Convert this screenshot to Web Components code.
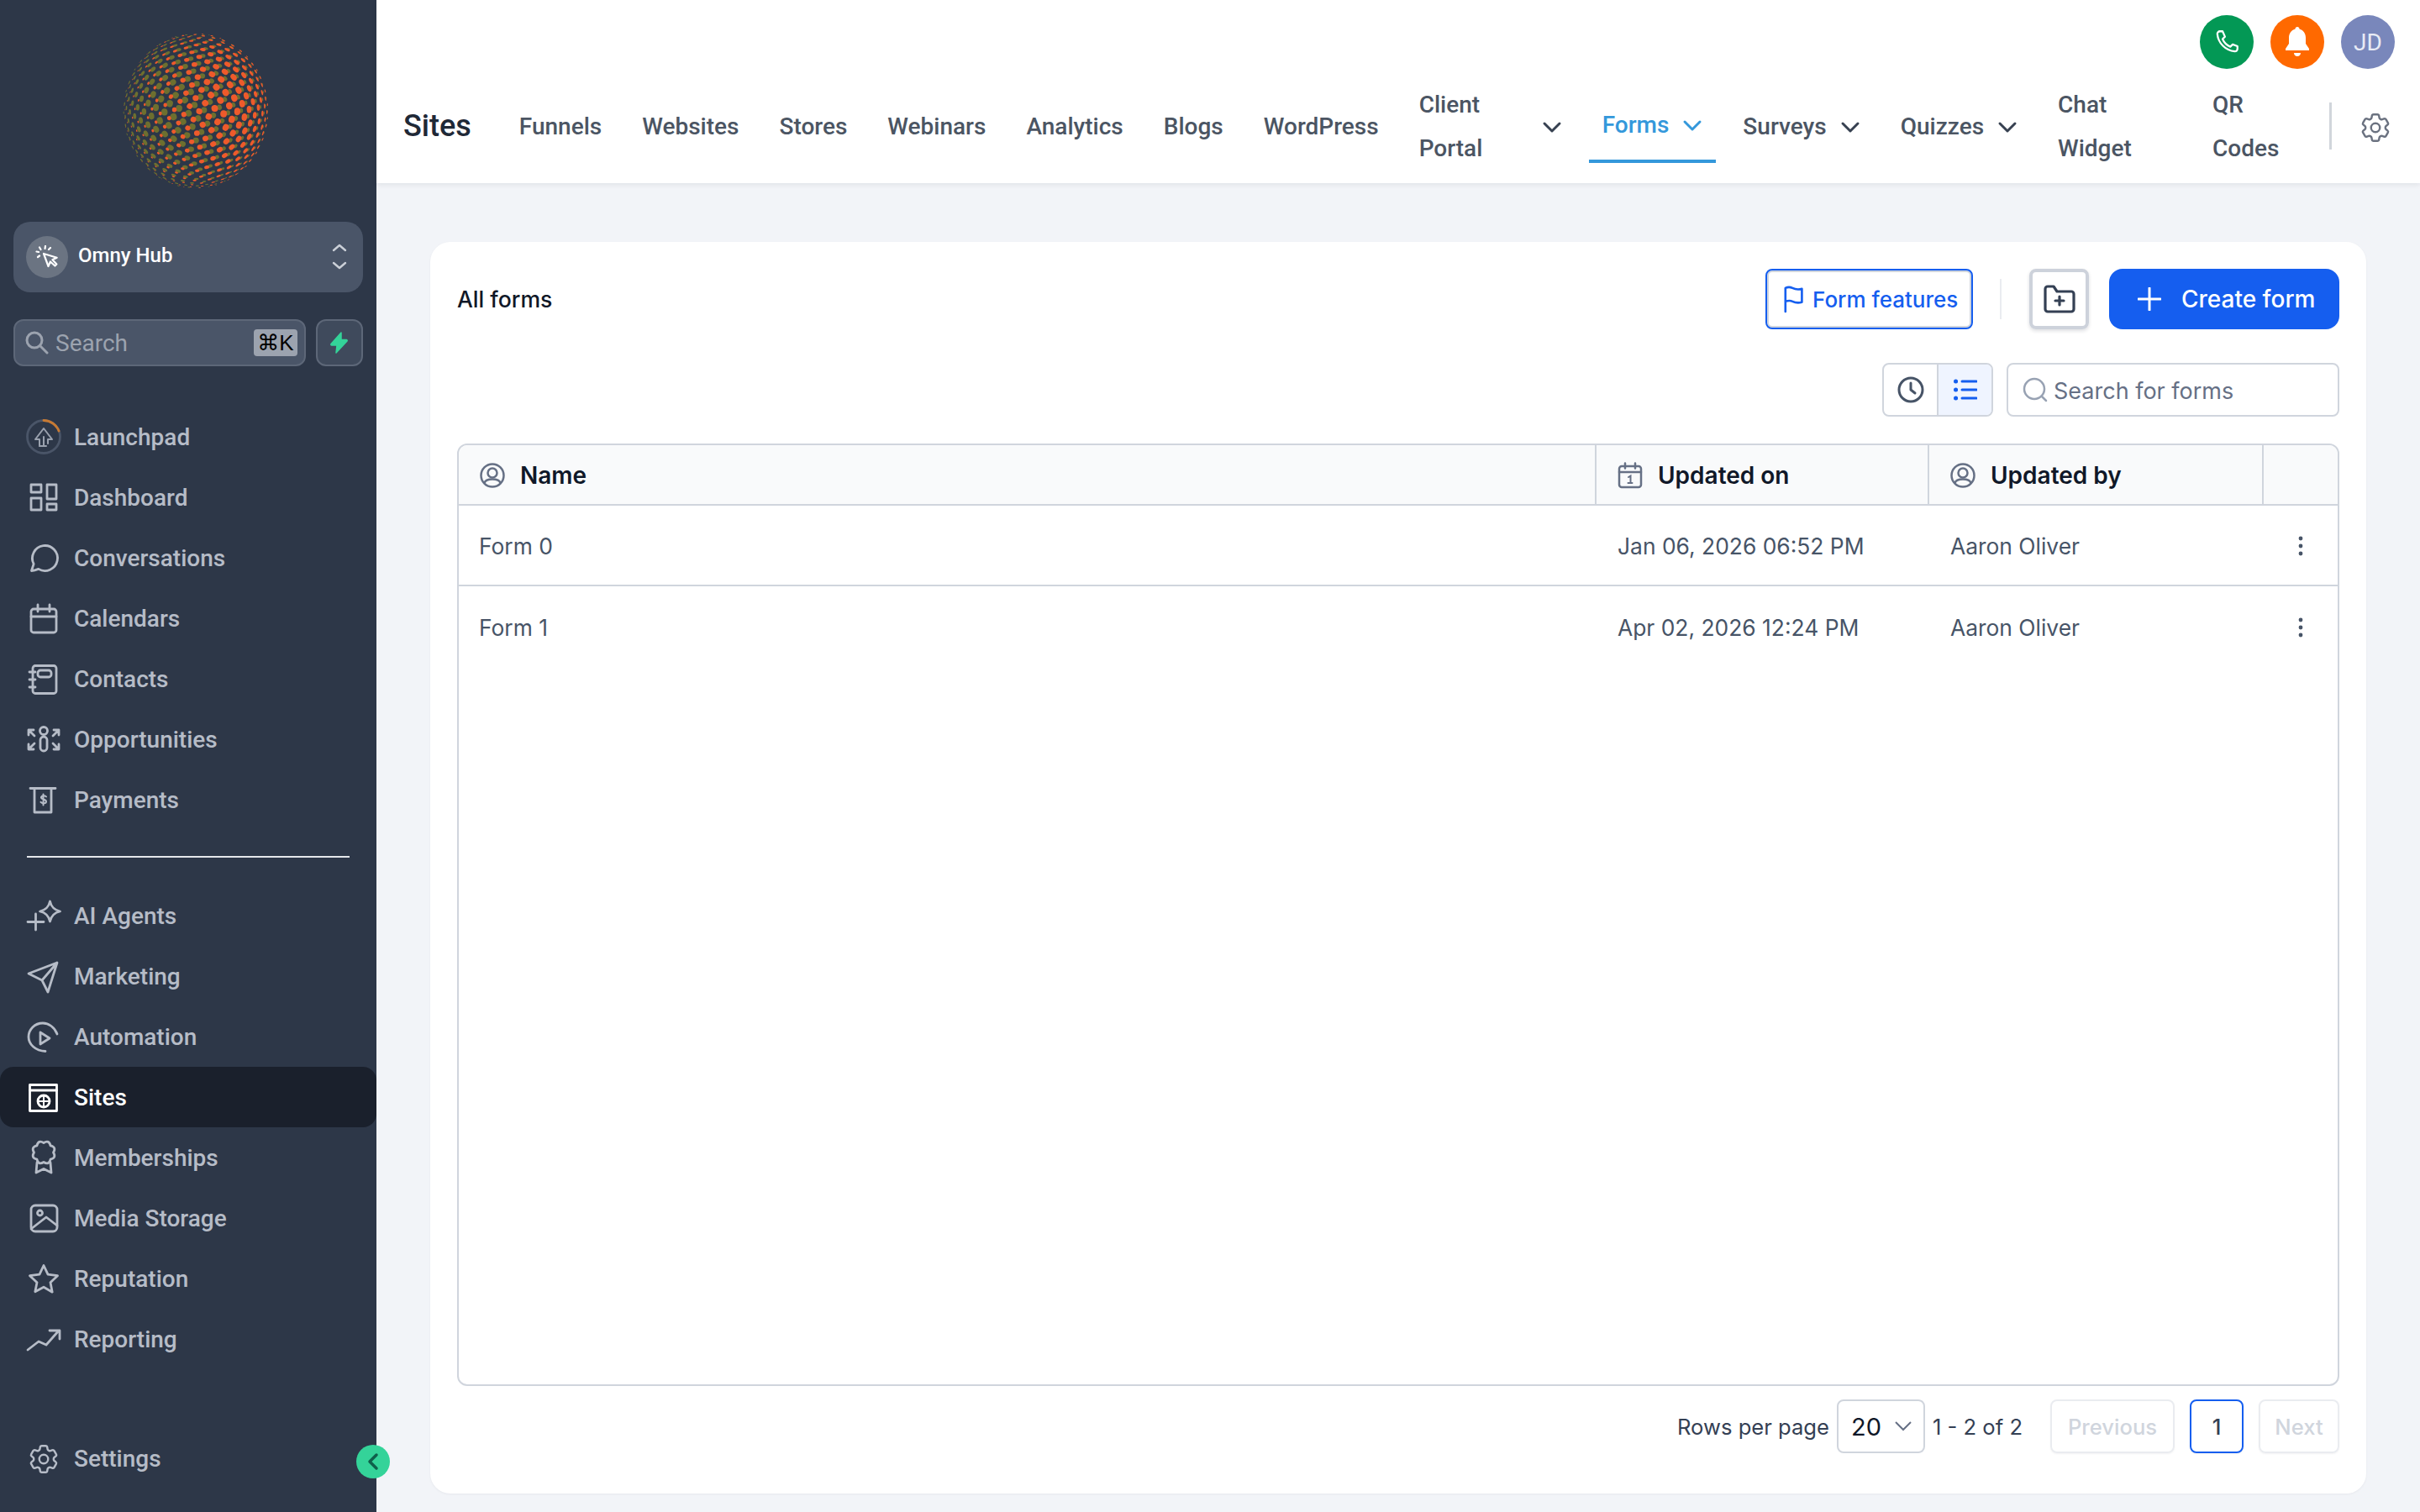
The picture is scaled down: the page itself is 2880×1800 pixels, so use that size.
<!DOCTYPE html>
<html lang="en">
<head>
<meta charset="utf-8">
<title>Forms</title>
<style>
	html, body { margin: 0; height: 100%; background: #f2f4f8; overflow: hidden; }
</style>
</head>
<body>
<app-shell>
	<side-bar slot="side"></side-bar>
	<top-bar slot="top"></top-bar>
	<forms-card slot="main"></forms-card>
</app-shell>

<script>
const gear = `<path d="M9.594 3.94c.09-.542.56-.94 1.11-.94h2.593c.55 0 1.02.398 1.11.94l.213 1.281c.063.374.313.686.645.87.074.04.147.083.22.127.325.196.72.257 1.075.124l1.217-.456a1.125 1.125 0 0 1 1.37.49l1.296 2.247a1.125 1.125 0 0 1-.26 1.431l-1.003.827c-.293.241-.438.613-.43.992a7.723 7.723 0 0 1 0 .255c-.008.378.137.75.43.991l1.004.827c.424.35.534.955.26 1.43l-1.298 2.247a1.125 1.125 0 0 1-1.369.491l-1.217-.456c-.355-.133-.75-.072-1.076.124a6.47 6.47 0 0 1-.22.128c-.331.183-.581.495-.644.869l-.213 1.281c-.09.543-.56.94-1.11.94h-2.594c-.55 0-1.019-.398-1.11-.94l-.213-1.281c-.062-.374-.312-.686-.644-.87a6.52 6.52 0 0 1-.22-.127c-.325-.196-.72-.257-1.076-.124l-1.217.456a1.125 1.125 0 0 1-1.369-.49l-1.297-2.247a1.125 1.125 0 0 1 .26-1.431l1.004-.827c.292-.24.437-.613.43-.991a6.932 6.932 0 0 1 0-.255c.007-.38-.138-.751-.43-.992l-1.004-.827a1.125 1.125 0 0 1-.26-1.43l1.297-2.247a1.125 1.125 0 0 1 1.37-.491l1.216.456c.356.133.751.072 1.076-.124.072-.044.146-.086.22-.128.332-.183.582-.495.644-.869l.214-1.28Z"/><circle cx="12" cy="12" r="3"/>`;

// scalloped edge of the memberships badge
function scallop(cx, cy, r, lobes) {
	let d = '';
	for (let i = 0; i < lobes; i++) {
		const a = i / lobes * Math.PI * 2, b = (i + 1) / lobes * Math.PI * 2, m = (a + b) / 2;
		const p = (t, q) => `${(cx + Math.cos(t) * q).toFixed(1)} ${(cy + Math.sin(t) * q).toFixed(1)}`;
		d += (i ? '' : `M${p(a, r)}`) + `Q${p(m, r * 1.45)} ${p(b, r)}`;
	}
	return d + 'Z';
}

const SIDE_ICONS = {
	launchpad: `<circle cx="24" cy="24" r="19.5" stroke="#4a5568"/><path d="M24 4.5A19.5 19.5 0 0 1 42 17" stroke="#c77a33"/><g stroke-width="2" stroke="#9aa1ae"><path d="M19 35V27H14L24 14l10 13h-5v5"/><path d="M24 24v11M24 35h-5M24 35h3"/></g>`,
	dashboard: `<rect x="9" y="9" width="12" height="9"/><rect x="28" y="9" width="11" height="17"/><rect x="9" y="25" width="12" height="14"/><rect x="28" y="32" width="11" height="7"/>`,
	chat: `<path d="M9.5 39.5l2.6-8.2A15 15 0 1 1 17.8 37.4C14.8 38.6 12.4 39.3 9.5 39.5Z"/>`,
	calendar: `<rect x="9" y="13" width="30" height="28" rx="3"/><path d="M9 22h30M17 8v8M31 8v8"/>`,
	contacts: `<rect x="11" y="8.500" width="28" height="33" rx="3"/><rect x="17" y="14" width="16" height="8" rx="3"/><path d="M7 16h7M7 25h7M7 34h7"/>`,
	opportunities: `<circle cx="24" cy="14" r="4.500"/><path d="M20 25a4 4 0 0 1 8 0v9a4 4 0 0 1-8 0Z"/><path d="M6 19v-6h6M6 13l7 7M42 19v-6h-6M42 13l-7 7M6 30v6h6M6 36l7-7M42 30v6h-6M42 36l-7-7"/>`,
	payments: `<path d="M8 10.500h30M13 10.500V39h20V10.500"/><path stroke-width="2" d="M27 20.500c-1-1.500-5-2-6 .3-1 3 6 2.400 6 5.400 0 2.500-5 2.600-6.500.6M23.500 17.500v13"/>`,
	agents: `<path d="M14.500 22v19M5 31.500h19"/><path d="M31.500 7c1.500 6.500 4.500 10 12 12-7.500 1.500-10.500 5.500-12 12-1.500-6.500-4.500-10.500-12-12 7.500-2 10.500-5.500 12-12Z"/>`,
	marketing: `<path d="M40 8L6 21l16 8 7 14ZM40 8L22 29"/>`,
	automation: `<path d="M40 21C37 13 30 8 23 8 13 8 6 16 6 24.500S14 41 26 41.500"/><path d="M20 19l11 7-11 7Z"/>`,
	sites: `<rect x="7.500" y="9.500" width="32" height="31"/><path d="M7.500 16h32"/><circle cx="24" cy="29" r="7"/><path stroke-width="2" d="M17 29h14M24 22v14"/>`,
	memberships: `<path d="${scallop(24, 18, 11.5, 8)}"/><path d="M16 30l-1 12 9-4.500 9 4.500-1-12"/>`,
	media: `<rect x="9" y="9" width="31" height="31" rx="5"/><circle cx="19.500" cy="18" r="3"/><path d="M9 37l18-14 13 10"/>`,
	star: `<path d="M24 8.500l5 10.700 11.500 1.500-8.500 8 2.200 11.500L24 34.200l-10.200 5.500L16 28.700l-8.500-8L19 19.200Z"/>`,
	reporting: `<path d="M5 37l13-10 9 4 15-17M31 14h12v10"/>`,
	settings: `<g transform="translate(3 4) scale(1.75)" stroke-width="1.4">${gear}</g>`
};

class AppShell extends HTMLElement {
	constructor() {
		super();
		this.attachShadow({mode: 'open'}).innerHTML = `
			<style>
				:host { display: grid; grid-template-columns: 448px 1fr; grid-template-rows: 218px 1fr; height: 1800px; width: 2880px; }
				.side { grid-row: 1 / 3; display: flex; }
				.top { display: flex; }
				.main { display: flex; padding: 70px 64px 22px; min-height: 0; }
			</style>
			<div class="side"><slot name="side"></slot></div>
			<div class="top"><slot name="top"></slot></div>
			<div class="main"><slot name="main"></slot></div>
		`;
	}
}

class DotSphere extends HTMLElement {
	constructor() {
		super();
		let dots = '';
		const layer = (count, yaw, pitch, size, fill, bias) => {
			const golden = Math.PI * (3 - Math.sqrt(5));
			for (let i = 0; i < count; i++) {
				const y = 1 - (i + .5) / count * 2, ring = Math.sqrt(1 - y * y), t = i * golden + yaw;
				let x = Math.cos(t) * ring, z = Math.sin(t) * ring, yy = y;
				// tilt so that the poles sit near the top and bottom edge
				const yy2 = yy * Math.cos(pitch) - z * Math.sin(pitch);
				z = yy * Math.sin(pitch) + z * Math.cos(pitch);
				yy = yy2;
				if (z <= .02) continue;
				const weight = .55 + .45 * bias(x, yy);
				const r = size * Math.pow(z, .4) * weight;
				if (r < .5) continue;
				const ang = Math.atan2(yy * 92, x * 86) * 180 / Math.PI;
				const cx = 88 + x * 86, cy = 93 + yy * 92;
				dots += `<ellipse cx="${cx.toFixed(1)}" cy="${cy.toFixed(1)}" rx="${(r * Math.max(z, .3)).toFixed(2)}" ry="${r.toFixed(2)}" transform="rotate(${(ang).toFixed(0)} ${cx.toFixed(1)} ${cy.toFixed(1)})" fill="${fill}"/>`;
			}
		};
		layer(640, .5, .1, 4.6, '#6d6f2f', (x, y) => Math.min(1, Math.max(.3, .6 - x * .7)));
		layer(640, 0, .1, 5, '#ee5a2b', (x, y) => Math.min(1, Math.max(-.4, .35 + x * 1 - y * .2)));
		this.attachShadow({mode: 'open'}).innerHTML = `
			<style>
				:host { display: block; width: 176px; height: 186px; }
				svg { display: block; }
			</style>
			<svg width="176" height="186" viewBox="0 0 176 186">${dots}</svg>
		`;
	}
}

class SideLink extends HTMLElement {
	constructor() {
		super();
		this.attachShadow({mode: 'open'}).innerHTML = `
			<style>
				:host { display: flex; align-items: center; gap: 12px; height: 72px; padding-left: 28px; border-radius: 16px; color: #b6bcc7; font: 500 28px Roboto, sans-serif; }
				:host([active]) { background: #1a202c; color: #fff; }
				svg { width: 48px; height: 48px; flex: none; fill: none; stroke: currentColor; stroke-width: 2.8; stroke-linejoin: round; stroke-linecap: round; }
			</style>
			<svg viewBox="0 0 48 48">${SIDE_ICONS[this.getAttribute('icon')]}</svg>
			<slot></slot>
		`;
	}
}

class SideBar extends HTMLElement {
	constructor() {
		super();
		this.attachShadow({mode: 'open'}).innerHTML = `
			<style>
				:host { display: flex; flex-direction: column; width: 448px; height: 1800px; background: #2d3748; position: relative; font-family: Roboto, sans-serif; }
				.logo { display: flex; justify-content: center; height: 264px; padding-top: 39px; box-sizing: border-box; padding-left: 18px; }
				.hub { display: flex; align-items: center; margin: 0 16px; height: 84px; background: #4a5568; border-radius: 20px; padding: 0 19px 0 15px; color: #fff; font-weight: 500; font-size: 24px; }
				.hub .logo-dot { width: 50px; height: 50px; border-radius: 50%; background: #6b7482; display: flex; align-items: center; justify-content: center; margin-right: 12px; }
				.hub span { flex: 1; padding-bottom: 4px; }
				.find { display: flex; gap: 12px; margin: 32px 16px 48px; height: 56px; }
				.box { display: flex; align-items: center; box-sizing: border-box; height: 56px; border: 2px solid #5d6778; border-radius: 12px; background: #4a5568; }
				.input { flex: 1; padding: 0 8px 0 12px; gap: 8px; color: #9ca3af; font-size: 28px; }
				.input span { flex: 1; }
				kbd { font: 400 26px "Liberation Sans", "DejaVu Sans", sans-serif; color: #000; background: #9ca3af; height: 32px; width: 52px; border-radius: 4px; display: flex; align-items: center; justify-content: center; }
				.bolt { width: 56px; justify-content: center; background: #3f4a5c; }
				nav { display: flex; flex-direction: column; }
				hr { border: 0; height: 2px; background: #e5e7eb; margin: 31px 32px 33px; }
				.end { margin-top: auto; margin-bottom: 28px; }
				.toggle { position: absolute; left: 424px; top: 1720px; width: 40px; height: 40px; border-radius: 50%; background: #34d399; display: flex; align-items: center; justify-content: center; }
			</style>
			<div class="logo"><dot-sphere></dot-sphere></div>
			<div class="hub">
				<div class="logo-dot"><svg width="28" height="28" viewBox="0 0 28 28" fill="none" stroke="#fff" stroke-width="2.200" stroke-linecap="round" stroke-linejoin="round"><path d="M10 10l5.500 15 2.400-5.500 5.500 5 2-2-5-5.300 5.300-2.400Z" fill="none"/><path d="M5 2.500l1.500 2.500M1.500 7.500l2.500.5M3 14l2-1.500M12 1l-.5 3M18 3l-2 2"/></svg></div>
				<span>Omny Hub</span>
				<svg width="18" height="34" viewBox="0 0 18 34" fill="none" stroke="#cbd0d8" stroke-width="2.400" stroke-linecap="round" stroke-linejoin="round"><path d="M2 9l7-6 7 6M2 24l7 6 7-6"/></svg>
			</div>
			<div class="find">
				<div class="box input">
					<svg width="28" height="28" viewBox="0 0 28 28" fill="none" stroke="#9ca3af" stroke-width="3" stroke-linecap="round"><circle cx="11" cy="11" r="9"/><path d="M18 18l8 8"/></svg>
					<span>Search</span>
					<kbd>⌘K</kbd>
				</div>
				<div class="box bolt"><svg width="24" height="26" viewBox="0 0 24 26" fill="#34d399" stroke="#34d399" stroke-width="1.500" stroke-linejoin="round"><path d="M14 1L2 14.500c-.5.600 0 1.500.7 1.500H9l-1 9 13-14c.5-.600 0-1.500-.8-1.500H14Z"/></svg></div>
			</div>
			<nav>
				<side-link icon="launchpad">Launchpad</side-link>
				<side-link icon="dashboard">Dashboard</side-link>
				<side-link icon="chat">Conversations</side-link>
				<side-link icon="calendar">Calendars</side-link>
				<side-link icon="contacts">Contacts</side-link>
				<side-link icon="opportunities">Opportunities</side-link>
				<side-link icon="payments">Payments</side-link>
			</nav>
			<hr>
			<nav>
				<side-link icon="agents">AI Agents</side-link>
				<side-link icon="marketing">Marketing</side-link>
				<side-link icon="automation">Automation</side-link>
				<side-link icon="sites" active>Sites</side-link>
				<side-link icon="memberships">Memberships</side-link>
				<side-link icon="media">Media Storage</side-link>
				<side-link icon="star">Reputation</side-link>
				<side-link icon="reporting">Reporting</side-link>
			</nav>
			<nav class="end"><side-link icon="settings">Settings</side-link></nav>
			<div class="toggle"><svg width="20" height="22" viewBox="0 0 20 22" fill="none" stroke="#0f5f4b" stroke-width="3.500" stroke-linecap="round" stroke-linejoin="round"><path d="M14 3l-8 8 8 8"/></svg></div>
		`;
	}
}

class TabItem extends HTMLElement {
	constructor() {
		super();
		const chevron = this.hasAttribute('menu') ? `<svg width="24" height="24" viewBox="0 0 24 24" fill="none" stroke="currentColor" stroke-width="3" stroke-linecap="round" stroke-linejoin="round"><path d="M3 8l9 9 9-9"/></svg>` : '';
		this.attachShadow({mode: 'open'}).innerHTML = `
			<style>
				:host { display: flex; align-items: center; gap: 16px; padding: 2px 16px 0; box-sizing: border-box; height: 104px; color: #4b5563; font: 500 28px/52px Roboto, sans-serif; white-space: nowrap; }
				:host([wrap]) { white-space: normal; }
				:host([active]) { color: #3498db; padding-top: 10px; box-sizing: content-box; align-self: flex-start; border-bottom: 4px solid #3498db; height: 82px; }
				svg { flex: none; color: #374151; }
				:host([active]) svg { color: #3498db; }
			</style>
			<slot></slot>${chevron}
		`;
	}
}

class TopBar extends HTMLElement {
	constructor() {
		super();
		this.attachShadow({mode: 'open'}).innerHTML = `
			<style>
				:host { display: block; flex: 1; height: 218px; box-sizing: border-box; background: #fff; box-shadow: 0 2px 6px rgba(16, 24, 40, .08); position: relative; font-family: Roboto, sans-serif; }
				.actions { display: flex; justify-content: flex-end; gap: 20px; padding: 18px 30px 0 0; }
				.round { width: 64px; height: 64px; border-radius: 50%; display: flex; align-items: center; justify-content: center; color: #e8ebf5; font-size: 28px; }
				.tabs { display: flex; align-items: center; padding-left: 32px; margin-top: 16px; height: 104px; gap: 16px; }
				h1 { margin: 0 25px 0 0; font: 500 36px Roboto, sans-serif; color: #1f2937; }
				.wide1 { width: 130px; }
				.wide2 { width: 136px; }
				.wide3 { width: 97px; }
				.rule { width: 3px; height: 56px; background: #d1d5db; margin-left: 10px; }
				.cog { width: 42px; height: 42px; margin: 4px 0 0 15px; fill: none; stroke: #6b7280; stroke-width: 1.400; }
			</style>
			<div class="actions">
				<div class="round" style="background:#039855"><svg width="34" height="34" viewBox="0 0 24 24" fill="none" stroke="#fff" stroke-width="1.600" stroke-linecap="round" stroke-linejoin="round"><path d="M8.500 3H6.300C5 3 4 4 4.100 5.300 4.800 13 11 19.200 18.700 19.900 20 20 21 19 21 17.700v-2.200l-4-1.500-2 2c-2.800-1.200-5.300-3.700-6.500-6.500l2-2Z"/></svg></div>
				<div class="round" style="background:#ff6900"><svg width="36" height="40" viewBox="0 0 36 40" fill="#fff"><path d="M18 2c-1.500 0-2.500 1-2.500 2.600C10.500 6 8 10.500 8 15v7l-4 6v2h28v-2l-4-6v-7c0-4.500-2.500-9-7.500-10.400C20.500 3 19.500 2 18 2Z"/><path d="M14 33h8c0 2.500-1.800 4-4 4s-4-1.500-4-4Z"/></svg></div>
				<div class="round" style="background:#7987bb">JD</div>
			</div>
			<div class="tabs">
				<h1>Sites</h1>
				<tab-item>Funnels</tab-item>
				<tab-item>Websites</tab-item>
				<tab-item>Stores</tab-item>
				<tab-item>Webinars</tab-item>
				<tab-item>Analytics</tab-item>
				<tab-item>Blogs</tab-item>
				<tab-item>WordPress</tab-item>
				<tab-item wrap menu><div class="wide1">Client Portal</div></tab-item>
				<tab-item active menu>Forms</tab-item>
				<tab-item menu>Surveys</tab-item>
				<tab-item menu>Quizzes</tab-item>
				<tab-item wrap><div class="wide2">Chat Widget</div></tab-item>
				<tab-item wrap><div class="wide3">QR Codes</div></tab-item>
				<div class="rule"></div>
				<svg class="cog" viewBox="0 0 24 24">${gear}</svg>
			</div>
		`;
	}
}

class DataTable extends HTMLElement {
	constructor() {
		super();
		const person = `<svg width="30" height="30" viewBox="0 0 30 30" fill="none" stroke="#667085" stroke-width="2.500"><circle cx="15" cy="15" r="13.500"/><circle cx="15" cy="12" r="5.500"/><path d="M5.500 24c1-3.500 5-4.500 9.500-4.500s8.500 1 9.500 4.500"/></svg>`;
		const cal = `<svg width="30" height="32" viewBox="0 0 30 32" fill="none" stroke="#667085" stroke-width="2.500" stroke-linecap="round"><rect x="2" y="5" width="26" height="25" rx="3"/><path d="M2 12h26M9 1.500v6M21 1.500v6"/><path stroke-width="2" d="M13 18l2.500-1.500V25M12.500 25h5"/></svg>`;
		const more = `<svg width="6" height="24" viewBox="0 0 6 24" fill="#475467"><circle cx="3" cy="3" r="2.400"/><circle cx="3" cy="12" r="2.400"/><circle cx="3" cy="21" r="2.400"/></svg>`;
		const row = (name, when, who) => `
			<div class="row">
				<div>${name}</div><div>${when}</div><div>${who}</div>
				<div class="more">${more}</div>
			</div>`;
		this.attachShadow({mode: 'open'}).innerHTML = `
			<style>
				:host { display: block; flex: 1; border: 2px solid #d0d5dd; border-radius: 12px; font: 400 28px Inter, sans-serif; color: #475467; overflow: hidden; }
				.head, .row { display: grid; grid-template-columns: 1354px 396px 398px 1fr; }
				.head { height: 72px; box-sizing: border-box; background: #f9fafb; border-bottom: 2px solid #d0d5dd; font-weight: 600; color: #101828; }
				.head > div { display: flex; align-items: center; gap: 18px; padding: 1px 0 0 25px; border-right: 2px solid #d0d5dd; box-sizing: border-box; }
				.head > div:last-child { border: 0; }
				.row { height: 96px; box-sizing: border-box; align-items: center; font-size: 26.4px; padding-top: 1px; }
				.row:first-of-type { border-bottom: 2px solid #d0d5dd; }
				.row > div { padding-left: 25px; }
				.row > div:first-child { padding-left: 24px; }
				.row > .more { padding: 0 0 0 41px; display: flex; }
			</style>
			<div class="head">
				<div>${person}Name</div>
				<div>${cal}Updated on</div>
				<div>${person}Updated by</div>
				<div></div>
			</div>
			<div class="rows">
				${row('Form 0', 'Jan 06, 2026 06:52 PM', 'Aaron Oliver')}
				${row('Form 1', 'Apr 02, 2026 12:24 PM', 'Aaron Oliver')}
			</div>
		`;
	}
}

class TablePager extends HTMLElement {
	constructor() {
		super();
		this.attachShadow({mode: 'open'}).innerHTML = `
			<style>
				:host { display: flex; align-items: center; justify-content: flex-end; height: 64px; margin-top: 16px; font: 400 25.6px Inter, sans-serif; color: #344054; }
				.select { display: flex; align-items: center; box-sizing: border-box; width: 105px; height: 64px; margin: 0 9px; padding: 0 14px 0 15px; justify-content: space-between; border: 2px solid #d0d5dd; border-radius: 8px; font-size: 29px; color: #101828; }
				.btn { display: flex; align-items: center; justify-content: center; box-sizing: border-box; height: 64px; border: 2px solid #eaecf0; border-radius: 8px; color: #d0d5dd; font-weight: 500; box-shadow: 0 1px 2px rgba(16, 24, 40, .05); }
				.prev { width: 148px; margin-left: 33px; }
				.cur { width: 64px; margin: 0 18px; border: 2px solid #155eef; color: #344054; }
				.next { width: 96px; }
			</style>
			<span>Rows per page</span>
			<div class="select"><span>20</span><svg width="20" height="12" viewBox="0 0 20 12" fill="none" stroke="#667085" stroke-width="2"><path d="M1 1l9 9 9-9"/></svg></div>
			<span>1 - 2 of 2</span>
			<div class="btn prev">Previous</div>
			<div class="btn cur">1</div>
			<div class="btn next">Next</div>
		`;
	}
}

class FormsCard extends HTMLElement {
	constructor() {
		super();
		this.attachShadow({mode: 'open'}).innerHTML = `
			<style>
				:host { display: flex; flex-direction: column; flex: 1; box-sizing: border-box; background: #fff; border-radius: 24px; padding: 32px 32px 48px; box-shadow: 0 1px 3px rgba(16, 24, 40, .05); font: 400 28px Inter, sans-serif; min-width: 0; }
				.bar { display: flex; align-items: center; height: 72px; }
				.title { font-weight: 500; font-size: 26.6px; color: #101828; margin-right: auto; }
				.outline { display: flex; align-items: center; gap: 7px; box-sizing: border-box; height: 72px; width: 247px; padding-left: 19px; border: 2px solid #155eef; box-shadow: inset 0 0 0 2px #d0d5dd; border-radius: 8px; color: #155eef; font-weight: 500; font-size: 26px; }
				.sep { width: 2px; height: 48px; background: #eaecf0; margin: 0 33px 0 32px; }
				.folder { display: flex; align-items: center; justify-content: center; box-sizing: border-box; width: 71px; height: 72px; border: 4px solid #cdd2db; border-radius: 8px; margin-right: 24px; box-shadow: 0 2px 4px rgba(16, 24, 40, .14); }
				.create { display: flex; align-items: center; gap: 24px; box-sizing: border-box; width: 274px; height: 72px; padding-left: 34px; background: #155eef; border-radius: 16px; color: #fff; font-weight: 500; font-size: 28px; }
				.tools { display: flex; justify-content: flex-end; gap: 16px; height: 64px; margin: 40px 0 32px; }
				.seg { display: flex; box-sizing: border-box; width: 132px; height: 64px; border: 2px solid #d0d5dd; border-radius: 8px; overflow: hidden; }
				.seg div { flex: 1; display: flex; align-items: center; justify-content: center; }
				.seg div + div { background: #eff4ff; border-left: 2px solid #d0d5dd; }
				.search { display: flex; align-items: center; gap: 7px; box-sizing: border-box; width: 396px; height: 64px; padding-left: 17px; border: 2px solid #d0d5dd; border-radius: 8px; color: #667085; font-size: 27px; }
				.search span { padding-top: 2px; }
			</style>
			<div class="bar">
				<div class="title">All forms</div>
				<div class="outline">
					<svg width="28" height="34" viewBox="0 0 30 34" fill="none" stroke="#155eef" stroke-width="2.800" stroke-linecap="round" stroke-linejoin="round"><path d="M3 33V3c3-1.500 6-1.500 9 0s8 2 12 1v17c-4 1-9 .5-12-1s-6-1-9 0"/></svg>
					Form features
				</div>
				<div class="sep"></div>
				<div class="folder"><svg width="38" height="34" viewBox="0 0 38 34" fill="none" stroke="#344054" stroke-width="3.200" stroke-linecap="round" stroke-linejoin="round"><path d="M2 9V5a3 3 0 0 1 3-3h7l4 6h17a3 3 0 0 1 3 3v18a3 3 0 0 1-3 3H5a3 3 0 0 1-3-3Z"/><path d="M19 14v10M14 19h10"/></svg></div>
				<div class="create"><svg width="28" height="28" viewBox="0 0 28 28" fill="none" stroke="#fff" stroke-width="3" stroke-linecap="round"><path d="M14 1v26M1 14h26"/></svg>Create form</div>
			</div>
			<div class="tools">
				<div class="seg">
					<div><svg width="32" height="32" viewBox="0 0 32 32" fill="none" stroke="#475467" stroke-width="3" stroke-linecap="round" stroke-linejoin="round"><circle cx="16" cy="16" r="14"/><path d="M16 8v8l5 4"/></svg></div>
					<div><svg width="28" height="26" viewBox="0 0 28 26" fill="none" stroke="#155eef" stroke-width="3" stroke-linecap="round"><path d="M10 3h17M10 13h17M10 23h17"/><path stroke-width="5" d="M2.500 3h.1M2.500 13h.1M2.500 23h.1"/></svg></div>
				</div>
				<div class="search">
					<svg width="30" height="30" viewBox="0 0 30 30" fill="none" stroke="#98a2b3" stroke-width="2.500" stroke-linecap="round"><circle cx="14" cy="14" r="12"/><path d="M23 23l5 5"/></svg>
					<span>Search for forms</span>
				</div>
			</div>
			<data-table></data-table>
			<table-pager></table-pager>
		`;
	}
}

customElements.define('dot-sphere', DotSphere);
customElements.define('side-link', SideLink);
customElements.define('side-bar', SideBar);
customElements.define('tab-item', TabItem);
customElements.define('top-bar', TopBar);
customElements.define('data-table', DataTable);
customElements.define('table-pager', TablePager);
customElements.define('forms-card', FormsCard);
customElements.define('app-shell', AppShell);
</script>
</body>
</html>
